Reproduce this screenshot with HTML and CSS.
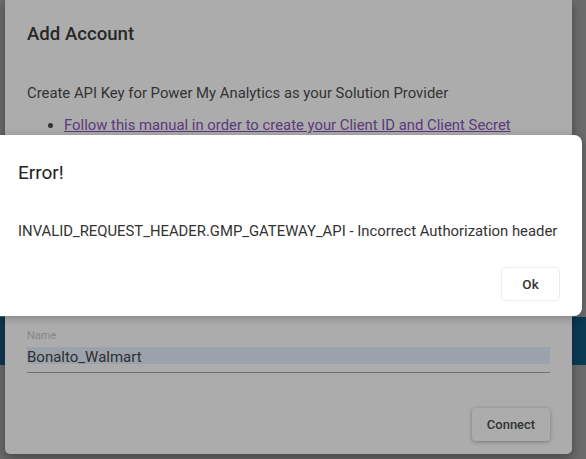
FILE: index.html
```html
<!DOCTYPE html>
<html>
<head>
<meta charset="utf-8">
<link rel="stylesheet" href="styles.css">
</head>
<body>
<div class="page">
  <div class="band"></div>
</div>

<div class="dialog">
  <h2 class="title">Add Account</h2>
  <p class="intro">Create API Key for Power My Analytics as your Solution Provider</p>
  <ul class="steps">
    <li><a class="link" href="#">Follow this manual in order to create your Client ID and Client Secret</a></li>
  </ul>
  <div class="spacer"></div>
  <label class="field">
    <span class="label">Name</span>
    <span class="input"><span class="autofill">Bonalto_Walmart</span></span>
  </label>
  <div class="actions">
    <button class="btn-raised">Connect</button>
  </div>
</div>

<div class="error">
  <h3 class="error-title">Error!</h3>
  <p class="error-msg">INVALID_REQUEST_HEADER.GMP_GATEWAY_API - Incorrect Authorization header</p>
  <div class="error-actions">
    <button class="btn-ok">Ok</button>
  </div>
</div>
</body>
</html>
```

FILE: styles.css
```css
html, body {
  margin: 0;
  padding: 0;
}
body {
  width: 586px;
  height: 459px;
  overflow: hidden;
  position: relative;
  background: #6b6b6b;
  font-family: Roboto, "Liberation Sans", sans-serif;
}
.page {
  height: 459px;
  display: flex;
  flex-direction: column;
}
.band {
  margin-top: 317px;
  height: 48px;
  background: #0b3a54;
}
.dialog {
  position: absolute;
  left: 5px;
  top: 0;
  width: 567px;
  height: 454px;
  box-sizing: border-box;
  padding: 0 22px;
  background: #acacac;
  border-radius: 0 0 5px 5px;
  box-shadow: 0 4px 12px rgba(0,0,0,0.35);
  display: flex;
  flex-direction: column;
}
.title {
  margin: 22px 0 0;
  font-size: 18.6px;
  line-height: 24px;
  font-weight: 500;
  color: #282828;
}
.intro {
  margin: 37px 0 0;
  font-size: 14.85px;
  line-height: 20px;
  color: #333;
  white-space: nowrap;
}
.steps {
  margin: 12px 0 0;
  padding-left: 37px;
  font-size: 14.85px;
  line-height: 20px;
  color: #333;
  white-space: nowrap;
}
.link {
  color: #5b3a7a;
}
.spacer {
  height: 194px;
}
.field {
  display: flex;
  flex-direction: column;
  border-bottom: 1px solid #717171;
  padding-bottom: 8px;
}
.label {
  font-size: 11px;
  line-height: 13px;
  color: #858585;
}
.input {
  margin-top: 5px;
  display: block;
  background: #9ca2ab;
  height: 17px;
}
.autofill {
  font-size: 15px;
  line-height: 17px;
  color: #2e2e2e;
}
.actions {
  margin-top: 35px;
  display: flex;
  justify-content: flex-end;
}
.btn-raised {
  width: 78px;
  height: 33px;
  border: 0;
  border-radius: 4px;
  background: #acacac;
  box-shadow: 0 1px 4px rgba(0,0,0,0.3);
  font-family: inherit;
  font-size: 13px;
  font-weight: 500;
  color: #333;
}
.error {
  position: absolute;
  left: 0;
  top: 135px;
  width: 582px;
  height: 181px;
  box-sizing: border-box;
  padding: 0 22px 0 18px;
  background: #fff;
  border-radius: 0 8px 8px 0;
  box-shadow: 0 2px 8px rgba(0,0,0,0.25);
  display: flex;
  flex-direction: column;
}
.error-title {
  margin: 26px 0 0;
  font-size: 19px;
  line-height: 24px;
  font-weight: 400;
  color: #222;
}
.error-msg {
  margin: 36px 0 0;
  font-size: 14.85px;
  line-height: 20px;
  color: #333;
  white-space: nowrap;
}
.error-actions {
  margin-top: 26px;
  display: flex;
  justify-content: flex-end;
}
.btn-ok {
  width: 59px;
  height: 34px;
  border: 1px solid #ececec;
  border-radius: 4px;
  background: #fff;
  font-family: inherit;
  font-size: 13.5px;
  font-weight: 500;
  color: #333;
}
```
